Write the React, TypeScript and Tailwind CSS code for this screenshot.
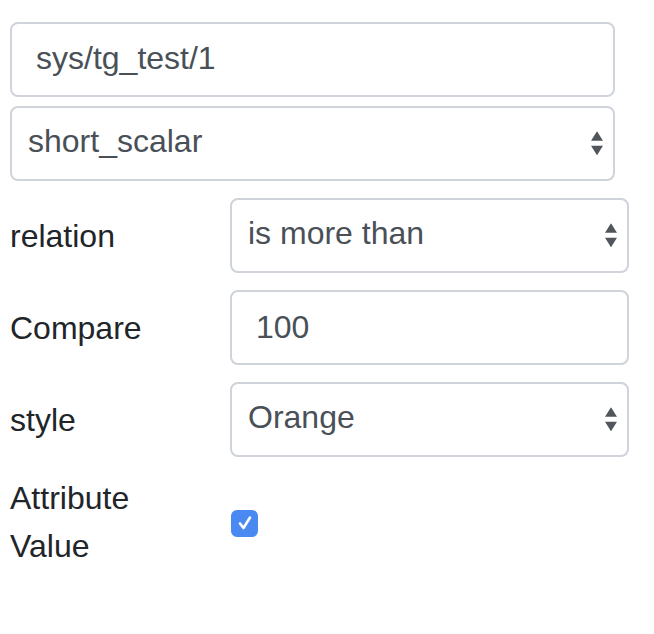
import { useState } from 'react'

// Стрелки нативного select (macOS)
function SelectArrows() {
  return (
    <svg
      className="pointer-events-none absolute right-[12px] top-1/2 -translate-y-[53%]"
      width="12"
      height="24"
      viewBox="0 0 12 24"
    >
      <path d="M6 0 L12 9.5 L0 9.5 Z" fill="#50565c" />
      <path d="M0 14.5 L12 14.5 L6 24 Z" fill="#50565c" />
    </svg>
  )
}

function FakeSelect({ value, options }: { value: string; options: string[] }) {
  const [val, setVal] = useState(value)
  return (
    <div className="relative w-full">
      <select
        value={val}
        onChange={(e) => setVal(e.target.value)}
        className="w-full h-[75px] appearance-none rounded-[8px] border-2 border-[#ced4da] bg-white pl-[16px] pr-[40px] pb-[5px] text-[32px] text-[#495057] outline-none font-['Liberation_Sans',Arial,sans-serif]"
      >
        {options.map((o) => (
          <option key={o} value={o}>
            {o}
          </option>
        ))}
      </select>
      <SelectArrows />
    </div>
  )
}

function FormRow({ label, children }: { label: string; children: React.ReactNode }) {
  return (
    <div className="flex items-center">
      <label className="w-[220px] shrink-0 leading-[48px] text-[#212529]">{label}</label>
      <div className="flex-1">{children}</div>
    </div>
  )
}

export default function App() {
  const [checked, setChecked] = useState(true)

  return (
    <div className="w-[654px] h-[634px] bg-white font-['Liberation_Sans',Arial,sans-serif] text-[32px]">
      <div className="pt-[22px] pl-[10px] pr-[25px]">
        {/* Устройство и атрибут */}
        <div className="w-[605px] flex flex-col gap-[9px]">
          <input
            readOnly
            value="sys/tg_test/1"
            className="w-full h-[75px] rounded-[8px] border-2 border-[#ced4da] bg-white px-[24px] pb-[2px] text-[32px] text-[#495057] outline-none"
          />
          <FakeSelect value="short_scalar" options={['short_scalar', 'long_scalar', 'double_scalar']} />
        </div>

        {/* Условия */}
        <div className="mt-[17px] w-[619px] flex flex-col gap-[17px]">
          <FormRow label="relation">
            <FakeSelect value="is more than" options={['is more than', 'is less than', 'is equal to']} />
          </FormRow>
          <FormRow label="Compare">
            <input
              readOnly
              value="100"
              className="w-full h-[75px] rounded-[8px] border-2 border-[#ced4da] bg-white px-[24px] text-[32px] text-[#495057] outline-none"
            />
          </FormRow>
          <FormRow label="style">
            <FakeSelect value="Orange" options={['Orange', 'Red', 'Green']} />
          </FormRow>
          <div className="flex items-center">
            <label className="w-[220px] shrink-0 leading-[48px] text-[#212529]">
              Attribute
              <br />
              Value
            </label>
            <button
              onClick={() => setChecked(!checked)}
              className={
                checked
                  ? 'ml-[1px] mt-[2px] w-[27px] h-[27px] rounded-[6px] bg-[#4a88f2] flex items-center justify-center'
                  : 'ml-[1px] mt-[2px] w-[27px] h-[27px] rounded-[6px] bg-white border-2 border-[#ced4da]'
              }
            >
              {checked && (
                <svg width="20" height="20" viewBox="0 0 20 20">
                  <path
                    d="M5 10.5 L8.5 15 L15 4.5"
                    fill="none"
                    stroke="white"
                    strokeWidth="2.6"
                    strokeLinecap="round"
                    strokeLinejoin="round"
                  />
                </svg>
              )}
            </button>
          </div>
        </div>
      </div>
    </div>
  )
}
